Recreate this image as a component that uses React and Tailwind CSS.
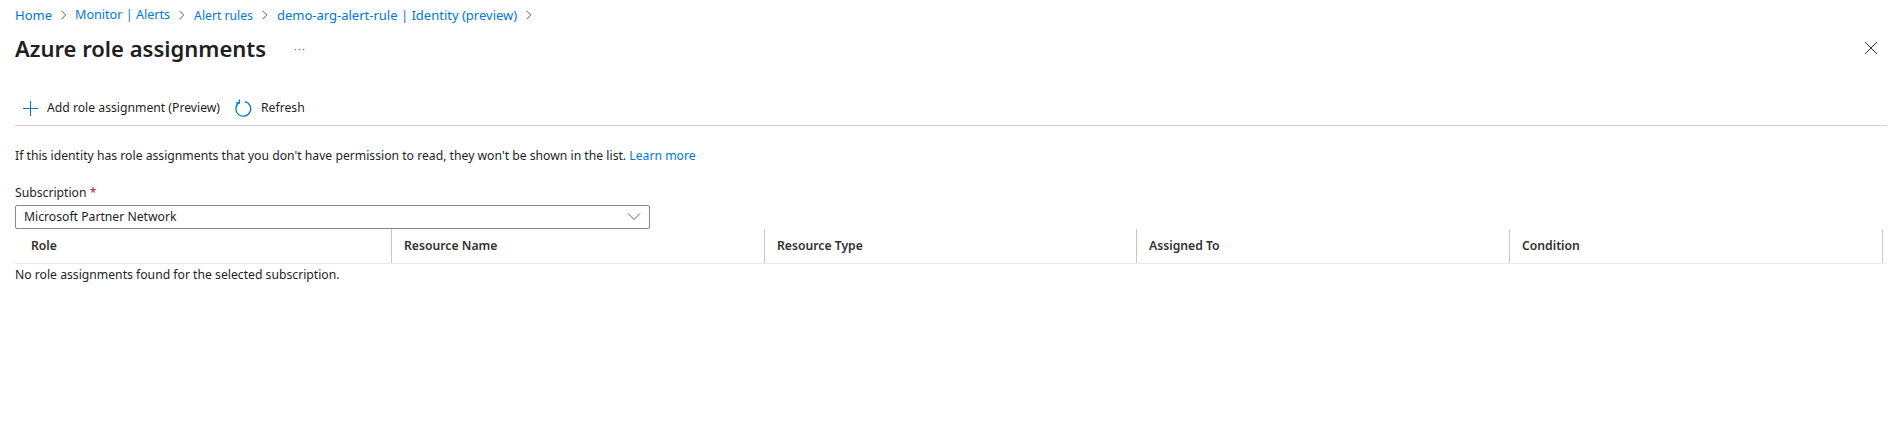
import React from "react";

function Chevron() {
  return (
    <svg width="8" height="10" viewBox="0 0 8 10" className="text-[#605e5c] mx-[8px]" fill="none" stroke="currentColor" strokeWidth="1">
      <path d="M1.5 0.8 L5.7 5 L1.5 9.2" />
    </svg>
  );
}

function Crumb({ children, className = "" }) {
  return <a className={`text-[#0078d4] whitespace-nowrap ${className}`}>{children}</a>;
}

const columns = [
  { name: "Role", w: "w-[377px]", pl: "pl-[16px]" },
  { name: "Resource Name", w: "w-[373px]", pl: "pl-[12px]" },
  { name: "Resource Type", w: "w-[372px]", pl: "pl-[12px]" },
  { name: "Assigned To", w: "w-[373px]", pl: "pl-[12px]" },
  { name: "Condition", w: "w-[373px]", pl: "pl-[12px]" },
];

export default function App() {
  return (
    <div className="w-[1901px] h-[429px] bg-white overflow-hidden font-['Noto_Sans',sans-serif] text-[12.2px] text-[#201f1e]">
      <div className="pl-[15px] pr-[14px]">
        <nav className="flex items-center h-[18px] mt-[6px] text-[13px] leading-[18px]">
          <Crumb>Home</Crumb>
          <Chevron />
          <Crumb className="text-[12.6px] -ml-[1px]">Monitor | Alerts</Crumb>
          <Chevron />
          <Crumb className="text-[12.2px] mt-[1px]">Alert rules</Crumb>
          <Chevron />
          <Crumb>demo-arg-alert-rule | Identity (preview)</Crumb>
          <Chevron />
        </nav>
        <div className="flex items-center h-[32px] mt-[8px]">
          <h1 className="text-[22px] leading-[32px] font-semibold text-[#201f1e] whitespace-nowrap w-[279px]">Azure role assignments</h1>
          <span className="text-[#605e5c] text-[11px] leading-none tracking-[1px] mt-[1px]">···</span>
          <svg className="ml-auto mr-[9px]" width="14" height="14" viewBox="0 0 14 14" fill="none" stroke="#323130" strokeWidth="1">
            <path d="M1 1 L13 13 M13 1 L1 13" />
          </svg>
        </div>
        <div className="flex items-center h-[34px] mt-[27px]">
          <svg className="ml-[8px]" width="15" height="15" viewBox="0 0 15 15" fill="none" stroke="#0078d4" strokeWidth="1">
            <path d="M7.5 0 V15 M0 7.5 H15" />
          </svg>
          <span className="ml-[9px] whitespace-nowrap">Add role assignment (Preview)</span>
          <svg className="ml-[14px] -mt-[1px]" width="18" height="18" viewBox="0 0 18 18" fill="none" stroke="#0078d4" strokeWidth="1.3">
            <path d="M5.6 3.4 A7.4 7.4 0 1 0 11 2.6" />
            <path d="M5.4 0.4 V3.8 H2" />
          </svg>
          <span className="ml-[9px]">Refresh</span>
        </div>
        <div className="h-px bg-[#d2d0ce] w-[1872px]" />
        <p className="mt-[21px] leading-[18px] whitespace-nowrap">
          If this identity has role assignments that you don't have permission to read, they won't be shown in the list. <a className="text-[#0078d4]">Learn more</a>
        </p>
        <label className="block mt-[19px] leading-[18px]">
          Subscription <span className="text-[#a4262c]">*</span>
        </label>
        <div className="flex items-center justify-between w-[635px] h-[24px] mt-[3px] border border-[#8a8886] rounded-[2px] pl-[8px] pr-[7px]">
          <span>Microsoft Partner Network</span>
          <svg width="16" height="10" viewBox="0 0 16 10" fill="none" stroke="#605e5c" strokeWidth="1">
            <path d="M2 1.5 L8 7.5 L14 1.5" />
          </svg>
        </div>
        <div className="flex w-[1871px] h-[35px] border-b border-[#edebe9]">
          {columns.map((c) => (
            <div key={c.name} className={`${c.w} ${c.pl} flex items-center border-r border-[#c8c6c4] font-semibold text-[#323130] whitespace-nowrap`}>
              {c.name}
            </div>
          ))}
        </div>
        <p className="mt-[2px] leading-[18px]">No role assignments found for the selected subscription.</p>
      </div>
    </div>
  );
}
